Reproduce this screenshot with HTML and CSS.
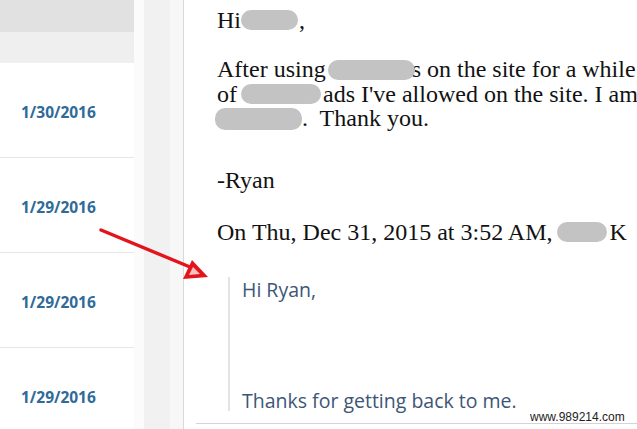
FILE: index.html
```html
<!DOCTYPE html>
<html>
<head>
<meta charset="utf-8">
<link rel="stylesheet" href="styles.css">
</head>
<body>
<div class="app">
  <aside class="list">
    <div class="list-head"></div>
    <div class="list-sub"></div>
    <div class="row"><span class="date">1/30/2016</span></div>
    <div class="row"><span class="date">1/29/2016</span></div>
    <div class="row"><span class="date">1/29/2016</span></div>
    <div class="row"><span class="date">1/29/2016</span></div>
  </aside>
  <div class="gap-a"></div>
  <div class="gap-b"></div>
  <div class="gap-c"></div>
  <main class="mail">
    <p class="line hi">Hi <span class="blur b-hi"></span>,</p>
    <p class="line l1">After using <span class="blur b-1"></span>s on the site for a while</p>
    <p class="line l2">of <span class="blur b-2"></span>ads I've allowed on the site. I am</p>
    <p class="line l3"><span class="blur b-3"></span>.&nbsp; Thank you.</p>
    <p class="line ryan">-Ryan</p>
    <p class="line on">On Thu, Dec 31, 2015 at 3:52 AM, <span class="blur b-4"></span>K</p>
    <blockquote class="quote">
      <p class="q1">Hi Ryan,</p>
      <p class="q2">Thanks for getting back to me.</p>
    </blockquote>
    <div class="bottom-rule"></div>
    <span class="watermark">www.989214.com</span>
  </main>
  <svg class="arrow" width="130" height="60" viewBox="0 0 130 60">
    <line x1="11" y1="5" x2="100" y2="42" stroke="#e3141b" stroke-width="3.4" stroke-linecap="round"/>
    <polygon points="118,52 93,54 102,35" fill="#e3141b"/>
    <polygon points="110,49 99,50 103,42" fill="#f6c2c2"/>
  </svg>
</div>
</body>
</html>
```

FILE: styles.css
```css
html, body {
  margin: 0;
  padding: 0;
  background: #ffffff;
}
.app {
  position: relative;
  display: flex;
  width: 637px;
  height: 429px;
  overflow: hidden;
}
.list {
  width: 134px;
  flex: none;
  display: flex;
  flex-direction: column;
  background: #ffffff;
  overflow: hidden;
}
.list-head {
  flex: none;
  height: 32px;
  background: #e1e1e1;
}
.list-sub {
  flex: none;
  height: 31px;
  background: #efefef;
}
.row {
  height: 95px;
  flex: none;
  border-bottom: 1px solid #e6e6e6;
  box-sizing: border-box;
  display: flex;
  align-items: center;
  padding-left: 21px;
  padding-top: 3px;
}
.date {
  font-family: "Open Sans", "DejaVu Sans", sans-serif;
  font-weight: 700;
  font-size: 15.5px;
  color: #2f6a98;
}
.gap-a { width: 10px; flex: none; background: #fbfbfb; }
.gap-b { width: 26px; flex: none; background: #f1f1f1; }
.gap-c { width: 13px; flex: none; background: #f7f7f7; border-right: 1px solid #d9d9d9; }
.mail {
  flex: 1;
  position: relative;
  padding-left: 33px;
  font-family: "Liberation Serif", "Times New Roman", serif;
  font-size: 24px;
  color: #121212;
  white-space: nowrap;
  overflow: hidden;
}
.line {
  margin: 0;
  height: 24.5px;
  line-height: 24.5px;
}
.hi { margin-top: 7.5px; }
.l1 { margin-top: 25px; }
.ryan { margin-top: 37px; }
.on { margin-top: 27.5px; }
.blur {
  position: relative;
  z-index: 1;
  display: inline-block;
  vertical-align: middle;
  height: 20px;
  background: #c3c3c3;
  border-radius: 10px;
  margin-top: -3px;
}
.b-hi { width: 57px; margin-left: -6px; margin-right: 1px; }
.b-1 { width: 87px; margin-left: -4px; margin-right: -3px; }
.b-2 { width: 80px; margin-left: -2px; margin-right: 2px; }
.b-3 { width: 87px; margin-left: -2px; height: 22px; }
.b-4 { width: 50px; margin-left: -2px; margin-right: 3px; }
.quote {
  margin: 33px 0 0 11px;
  padding: 0 0 0 12px;
  border-left: 2px solid #e3e3e3;
  height: 134px;
  font-family: "Open Sans", "DejaVu Sans", sans-serif;
  font-size: 19.5px;
  color: #3d5676;
  box-sizing: border-box;
}
.quote p { margin: 0; line-height: 26px; }
.q2 { margin-top: 85px !important; }
.bottom-rule {
  position: absolute;
  left: 12px;
  right: 0;
  top: 423px;
  height: 1px;
  background: #d4d4d4;
}
.watermark {
  position: absolute;
  left: 346px;
  top: 411px;
  font-family: "Liberation Sans", Arial, sans-serif;
  font-size: 12px;
  color: #222;
  line-height: 12px;
}
.arrow {
  position: absolute;
  left: 90px;
  top: 225px;
}
```
